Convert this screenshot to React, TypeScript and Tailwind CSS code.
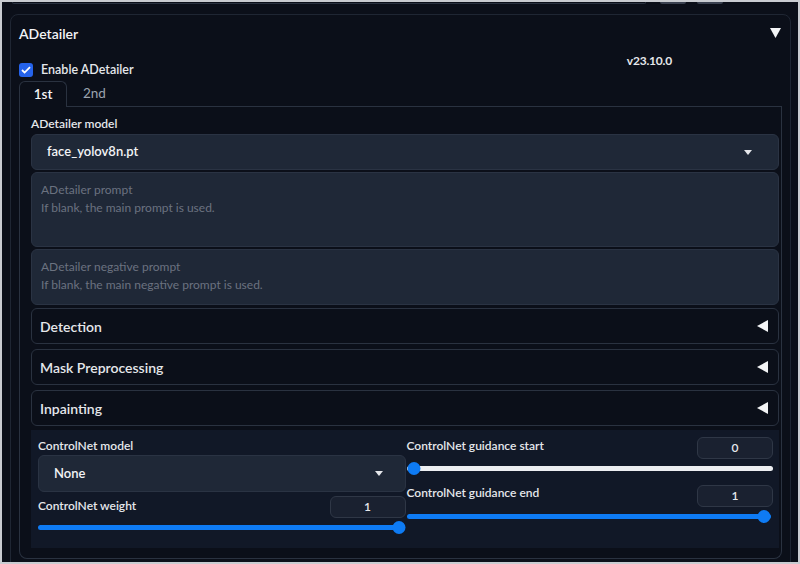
import React from 'react'

const font = { fontFamily: 'Lato, "Noto Sans", sans-serif' }

function Caret() {
  return (
    <svg width="8" height="5" viewBox="0 0 8 5" className="shrink-0">
      <path d="M0 0h8L4 5z" fill="#e5e7eb" />
    </svg>
  )
}

function LeftTri() {
  return (
    <svg width="11" height="12" viewBox="0 0 11 12" className="shrink-0">
      <path d="M11 0v12L0 6z" fill="#f3f4f6" />
    </svg>
  )
}

function Accordion({ title }: { title: string }) {
  return (
    <div className="flex h-[36px] items-center justify-between rounded-md border border-[#2a3240] bg-[#0b0f19] pl-[8px] pr-[10px]">
      <span className="text-[14px] font-semibold text-[#e5e7eb]">{title}</span>
      <LeftTri />
    </div>
  )
}

function NumBox({ value }: { value: string }) {
  return (
    <div className="flex h-[22px] w-[76px] items-center justify-center rounded-md border border-[#2f3746] bg-[#1a2130] text-[12px] font-semibold text-[#e5e7eb]">
      {value}
    </div>
  )
}

function Slider({ pct, filled }: { pct: number; filled: boolean }) {
  return (
    <div className="relative flex h-[14px] items-center">
      <div className={filled ? 'h-[5px] w-full rounded-full bg-[#0e7bf4]' : 'h-[5px] w-full rounded-full bg-[#eceef1]'} />
      <div
        className="absolute top-[1px] h-[13px] w-[13px] -translate-x-1/2 rounded-full bg-[#0e7bf4]"
        style={{ left: `${pct}%` }}
      />
    </div>
  )
}

export default function App() {
  return (
    <div style={font} className="relative h-[564px] w-[800px] overflow-hidden border-2 border-[#c9ccd1] bg-[#0b0f19]">
      {/* bits of the element above, cut off */}
      <div className="flex h-[2px] items-start">
        <div className="ml-[10px] h-[2px] w-[634px] rounded-b-md border-x border-b border-[#2a3240]" />
        <div className="ml-[14px] h-[2px] w-[26px] rounded-b-md bg-[#3a4150]" />
        <div className="ml-[11px] h-[2px] w-[26px] rounded-b-md bg-[#3a4150]" />
      </div>

      <div className="ml-[8px] mt-[10px] h-[600px] w-[781px] rounded-t-lg border border-[#1f2633] pl-[8px] pr-[8px]">
        <div className="flex h-[36px] items-center justify-between">
          <span className="text-[14px] font-semibold text-[#f3f4f6]">ADetailer</span>
          <svg width="11" height="10" viewBox="0 0 11 10" className="mr-[1px]">
            <path d="M0 0h11L5.5 10z" fill="#f3f4f6" />
          </svg>
        </div>

        <div className="flex h-[30px] items-start">
          <div className="mt-[10px] flex items-center gap-[8px]">
            <div className="flex h-[14px] w-[14px] items-center justify-center rounded-[3px] bg-[#2563eb]">
              <svg width="10" height="8" viewBox="0 0 10 8">
                <path d="M1 4l2.6 2.6L9 1.2" fill="none" stroke="white" strokeWidth="1.8" />
              </svg>
            </div>
            <span className="text-[12.5px] font-semibold text-[#e5e7eb]">Enable ADetailer</span>
          </div>
          <span className="ml-auto mr-[110px] mt-[1px] text-[12px] font-bold tracking-[-0.2px] text-[#e5e7eb]">v23.10.0</span>
        </div>

        <div className="flex h-[26px] items-end">
          <div className="flex h-[26px] w-[48px] items-center justify-center rounded-t-md border-x border-t border-[#2a3240] text-[13.5px] font-semibold text-[#f3f4f6]">
            1st
          </div>
          <div className="flex h-[26px] flex-1 items-center border-b border-[#2a3240] pl-[16px] text-[13.5px] text-[#9ca3af]">
            2nd
          </div>
        </div>

        <div className="h-[452px] rounded-b-lg border-x border-b border-[#2a3240] pl-[11px] pr-[2px] pt-[10px]">
          <div className="flex flex-col">
            <div className="flex h-[14px] items-center text-[12px] font-semibold text-[#e5e7eb]">ADetailer model</div>
            <div className="mt-[3px] flex h-[36px] items-center justify-between rounded-md border border-[#2a3343] bg-[#1f2837] pl-[15px] pr-[26px]">
              <span className="text-[13px] font-semibold text-[#f3f4f6]">face_yolov8n.pt</span>
              <Caret />
            </div>
            <div className="mt-[2px] h-[75px] rounded-md border border-[#2a3343] bg-[#1f2837] px-[9px] pt-[8px] text-[12px] leading-[18px] text-[#6b7280]">
              <div>ADetailer prompt</div>
              <div>If blank, the main prompt is used.</div>
            </div>
            <div className="mt-[2px] h-[56px] rounded-md border border-[#2a3343] bg-[#1f2837] px-[9px] pt-[8px] text-[12px] leading-[18px] text-[#6b7280]">
              <div>ADetailer negative prompt</div>
              <div>If blank, the main negative prompt is used.</div>
            </div>
            <div className="mt-[3px] flex flex-col gap-[5px]">
              <Accordion title="Detection" />
              <Accordion title="Mask Preprocessing" />
              <Accordion title="Inpainting" />
            </div>

            <div className="mt-[4px] grid h-[118px] grid-cols-2 bg-[#111827] pl-[7px] pr-[6px]">
              <div className="flex flex-col">
                <div className="mt-[9px] flex h-[14px] items-center text-[12px] font-semibold text-[#e5e7eb]">ControlNet model</div>
                <div className="mt-[2px] flex h-[37px] items-center justify-between rounded-md border border-[#2a3343] bg-[#1f2837] pl-[15px] pr-[22px]">
                  <span className="text-[13px] font-semibold text-[#f3f4f6]">None</span>
                  <Caret />
                </div>
                <div className="mt-[4px] flex h-[22px] items-start justify-between">
                  <span className="mt-[1px] text-[12px] font-semibold text-[#e5e7eb]">ControlNet weight</span>
                  <NumBox value="1" />
                </div>
                <div className="mt-[2px] pr-[7px]">
                  <Slider pct={100} filled />
                </div>
              </div>

              <div className="flex flex-col">
                <div className="mt-[7px] flex h-[22px] items-start justify-between pl-[1px]">
                  <span className="text-[12px] font-semibold text-[#e5e7eb]">ControlNet guidance start</span>
                  <NumBox value="0" />
                </div>
                <div className="mt-[2px] pl-[1px]">
                  <Slider pct={2} filled={false} />
                </div>
                <div className="mt-[10px] flex h-[22px] items-start justify-between pl-[1px]">
                  <span className="-mt-[1px] text-[12px] font-semibold text-[#e5e7eb]">ControlNet guidance end</span>
                  <NumBox value="1" />
                </div>
                <div className="mt-[2px] pl-[1px] pr-[2px]">
                  <Slider pct={98} filled />
                </div>
              </div>
            </div>
          </div>
        </div>
      </div>
    </div>
  )
}
